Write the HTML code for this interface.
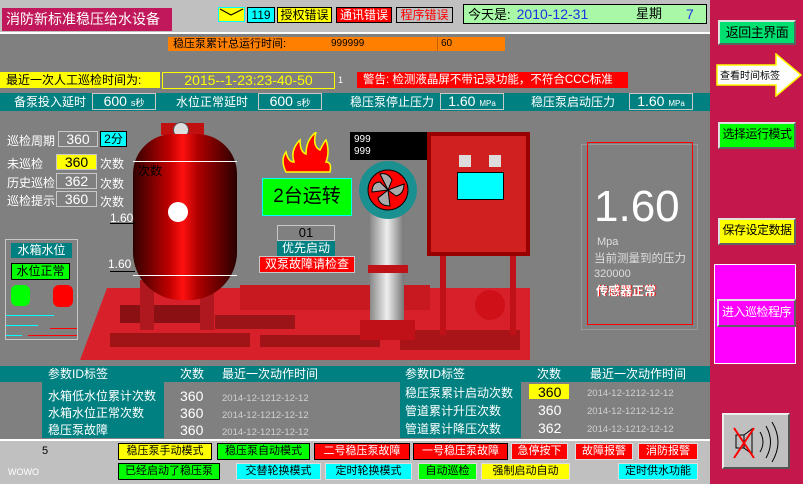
<!DOCTYPE html>
<html><head><meta charset="utf-8"><style>
*{margin:0;padding:0;box-sizing:border-box}
body{width:803px;height:484px;background:#808080;position:relative;overflow:hidden;font-family:"Liberation Sans","Noto Sans CJK SC",sans-serif;font-size:12px}
.a{position:absolute;white-space:nowrap}
.b{position:absolute;white-space:nowrap;text-align:center;font-size:12px;line-height:15px;border:1px solid #000}
.inb{position:absolute;border:1px solid #c8c8c8;color:#fff;text-align:center;font-size:14px;line-height:14px;white-space:nowrap}
.rb{position:absolute;border:2px solid #e0e0e0;border-right-color:#606060;border-bottom-color:#606060;text-align:center;font-size:12px;line-height:21px;color:#000;white-space:nowrap;letter-spacing:-0.5px}
.bt{position:absolute;border:1px solid #000;text-align:center;font-size:11px;line-height:15px;white-space:nowrap}
</style></head><body>
<!-- top bar -->
<div class="a" style="left:0;top:0;width:710px;height:34px;background:#c0c0c0;border-bottom:2px solid #fff"></div>
<div class="a" style="left:2px;top:8px;width:170px;height:23px;background:#c0185a;color:#fff;font-size:14px;line-height:23px;padding-left:4px">消防新标准稳压给水设备</div>
<div class="a" style="left:218px;top:7px;width:27px;height:15px;background:#ff0;border:1px solid #0ff"><svg width="25" height="13"><polyline points="1,1 12,7 24,1" fill="none" stroke="#000" stroke-width="1"/></svg></div>
<div class="b" style="left:247px;top:7px;width:28px;height:16px;background:#0ff">119</div>
<div class="b" style="left:277px;top:7px;width:55px;height:16px;background:#ff0">授权错误</div>
<div class="b" style="left:336px;top:7px;width:56px;height:16px;background:#f00;color:#fff">通讯错误</div>
<div class="b" style="left:396px;top:7px;width:57px;height:16px;background:#c0c0c0;color:#f00">程序错误</div>
<div class="a" style="left:463px;top:4px;width:244px;height:20px;background:#a8f8a8;border:1px solid #000;font-size:13px;line-height:18px"><span style="margin-left:4px">今天是:</span><span style="color:#2030e0;margin-left:6px;font-size:14px">2010-12-31</span><span style="position:absolute;left:172px">星期</span><span style="position:absolute;left:222px;color:#2030e0;font-size:14px">7</span></div>
<!-- orange -->
<div class="a" style="left:168px;top:37px;width:337px;height:14px;background:#ff8000;font-size:11px;line-height:14px"><span style="margin-left:5px">稳压泵累计总运行时间:</span><span style="position:absolute;left:163px;font-size:10px">999999</span><span style="position:absolute;left:269px;top:0;width:1px;height:14px;background:#c06000"></span><span style="position:absolute;left:273px;font-size:10px">60</span></div>
<!-- yellow row -->
<div class="a" style="left:0;top:72px;width:160px;height:16px;background:#ff0;font-size:12px;line-height:16px;padding-left:6px">最近一次人工巡检时间为:</div>
<div class="a" style="left:162px;top:72px;width:173px;height:17px;border:1px solid #ff0;color:#ff0;font-size:14px;line-height:15px;text-align:center">2015--1-23:23-40-50</div>
<div class="a" style="left:338px;top:75px;color:#fff;font-size:9px">1</div>
<div class="a" style="left:357px;top:72px;width:271px;height:16px;background:#f00;color:#fff;font-size:11.5px;line-height:16px;padding-left:6px;overflow:hidden">警告: 检测液晶屏不带记录功能，不符合CCC标准</div>
<!-- teal row -->
<div class="a" style="left:0;top:93px;width:710px;height:18px;background:#008080;color:#fff;font-size:12px;line-height:18px">
<span class="a" style="left:14px">备泵投入延时</span><span class="a" style="left:176px">水位正常延时</span><span class="a" style="left:350px">稳压泵停止压力</span><span class="a" style="left:531px">稳压泵启动压力</span></div>
<div class="inb" style="left:92px;top:93px;width:64px;height:17px">600 <span style="font-size:9px">s秒</span></div>
<div class="inb" style="left:258px;top:93px;width:64px;height:17px">600 <span style="font-size:9px">s秒</span></div>
<div class="inb" style="left:440px;top:93px;width:64px;height:17px">1.60 <span style="font-size:8px">MPa</span></div>
<div class="inb" style="left:629px;top:93px;width:64px;height:17px">1.60 <span style="font-size:8px">MPa</span></div>
<!-- left inspection -->
<div class="a" style="left:7px;top:132px;color:#fff;font-size:12px">巡检周期</div>
<div class="inb" style="left:58px;top:131px;width:40px;height:16px;font-size:14px">360</div>
<div class="a" style="left:100px;top:131px;width:27px;height:16px;background:#0ff;border:1px solid #000;text-align:center;font-size:12px;line-height:14px">2分</div>
<div class="a" style="left:7px;top:155px;color:#fff;font-size:12px">未巡检</div>
<div class="a" style="left:56px;top:154px;width:41px;height:16px;background:#ff0;border:1px solid #c8c8c8;text-align:center;font-size:14px;line-height:14px">360</div>
<div class="a" style="left:100px;top:155px;color:#fff;font-size:12px">次数</div>
<div class="a" style="left:7px;top:174px;color:#fff;font-size:12px">历史巡检</div>
<div class="inb" style="left:56px;top:173px;width:41px;height:16px">362</div>
<div class="a" style="left:100px;top:175px;color:#fff;font-size:12px">次数</div>
<div class="a" style="left:7px;top:192px;color:#fff;font-size:12px">巡检提示</div>
<div class="inb" style="left:56px;top:191px;width:41px;height:16px">360</div>
<div class="a" style="left:100px;top:193px;color:#fff;font-size:12px">次数</div>
<!-- water tank box -->
<div class="a" style="left:5px;top:239px;width:73px;height:101px;border:1px solid #c8c8c8"></div>
<div class="a" style="left:11px;top:243px;width:61px;height:15px;background:#008080;color:#fff;font-size:12px;line-height:15px;text-align:center">水箱水位</div>
<div class="a" style="left:11px;top:263px;width:59px;height:17px;background:#0f0;border:1px solid #000;font-size:12px;line-height:15px;text-align:center">水位正常</div>
<div class="a" style="left:11px;top:285px;width:19px;height:21px;background:#0f0;border-radius:6px"></div>
<div class="a" style="left:53px;top:285px;width:20px;height:22px;background:#f00;border-radius:6px"></div>
<div class="a" style="left:6px;top:315px;width:48px;height:1px;background:#0ff"></div>
<div class="a" style="left:6px;top:325px;width:32px;height:1px;background:#0ff"></div>
<div class="a" style="left:50px;top:328px;width:27px;height:1px;background:#f00"></div>
<div class="a" style="left:6px;top:335px;width:16px;height:1px;background:#0ff"></div>
<div class="a" style="left:28px;top:335px;width:49px;height:1px;background:#f00"></div>
<!-- equipment -->
<div class="a" style="left:80px;top:288px;width:450px;height:72px;background:#d8202a;clip-path:polygon(6% 0,100% 0,100% 100%,0 100%)"></div>
<div class="a" style="left:120px;top:305px;width:90px;height:18px;background:#8a1014"></div>
<div class="a" style="left:215px;top:315px;width:80px;height:14px;background:#9a1418"></div>
<div class="a" style="left:110px;top:333px;width:140px;height:14px;background:#a01418"></div>
<div class="a" style="left:260px;top:335px;width:120px;height:12px;background:#a01418"></div>
<div class="a" style="left:400px;top:330px;width:120px;height:20px;background:#a81418"></div>
<div class="a" style="left:140px;top:280px;width:14px;height:50px;background:#b01820"></div>
<div class="a" style="left:200px;top:280px;width:14px;height:50px;background:#b01820"></div>
<div class="a" style="left:240px;top:285px;width:190px;height:25px;background:#c81820"></div>
<div class="a" style="left:161px;top:123px;width:43px;height:12px;background:#c01010"></div>
<div class="a" style="left:173px;top:122px;width:16px;height:16px;background:#ddd;border-radius:50%;border:1px solid #555"></div>
<div class="a" style="left:133px;top:134px;width:104px;height:166px;border-radius:40px 40px 48px 48px;background:linear-gradient(90deg,#300000,#c00000 35%,#ff1010 48%,#b00000 62%,#280000)"></div>
<div class="a" style="left:133px;top:161px;width:104px;height:1px;background:#fff"></div>
<div class="a" style="left:133px;top:275px;width:104px;height:1px;background:#fff"></div>
<div class="a" style="left:138px;top:162px;font-size:12px;color:#000">次数</div>
<div class="a" style="left:168px;top:202px;width:20px;height:20px;background:#fff;border-radius:50%"></div>
<div class="a" style="left:110px;top:211px;color:#fff;font-size:12px">1.60</div>
<div class="a" style="left:110px;top:223px;width:25px;height:1px;background:#000"></div>
<div class="a" style="left:108px;top:257px;color:#fff;font-size:12px">1.60</div>
<div class="a" style="left:110px;top:271px;width:25px;height:1px;background:#000"></div>
<!-- pump -->
<div class="a" style="left:370px;top:195px;width:34px;height:135px;background:linear-gradient(90deg,#888,#eee,#777)"></div>
<div class="a" style="left:368px;top:265px;width:40px;height:8px;background:#c01018"></div>
<div class="a" style="left:360px;top:320px;width:55px;height:20px;background:#c01018"></div>
<div class="a" style="left:440px;top:255px;width:6px;height:80px;background:#c01018"></div>
<div class="a" style="left:510px;top:255px;width:6px;height:80px;background:#c01018"></div>
<div class="a" style="left:475px;top:290px;width:30px;height:30px;background:#d01018;border-radius:50%"></div>
<!-- cabinet -->
<div class="a" style="left:427px;top:132px;width:103px;height:124px;background:#d02020;border:4px solid #900"></div>
<div class="a" style="left:457px;top:172px;width:47px;height:28px;background:#0ff;border:1px solid #000"></div>
<div class="a" style="left:459px;top:155px;width:12px;height:12px;background:#ddd"></div>
<div class="a" style="left:489px;top:155px;width:12px;height:12px;background:#ddd"></div>
<div class="a" style="left:350px;top:132px;width:77px;height:28px;background:#000;color:#fff;font-size:10px;line-height:12px;padding:2px 4px">999<br>999</div>
<svg class="a" style="left:358px;top:160px" width="60" height="60"><circle cx="30" cy="30" r="29" fill="#1a9090"/><circle cx="30" cy="30" r="20" fill="#f00" stroke="#000"/><path d="M30 30 L22 14 Q30 12 34 20Z M30 30 L46 24 Q46 34 38 36Z M30 30 L32 46 Q22 46 20 38Z M30 30 L14 32 Q14 22 22 22Z" fill="#aaa" stroke="#000"/></svg>
<!-- fire -->
<svg class="a" style="left:280px;top:132px" width="52" height="44"><path d="M6 40 Q0 28 6 20 Q8 30 14 30 Q10 18 20 8 Q20 20 26 22 Q26 8 36 0 Q32 14 40 18 Q44 10 46 8 Q50 20 46 30 Q52 30 50 40Z" fill="#f00" stroke="#ff0" stroke-width="1.5"/></svg>
<div class="a" style="left:262px;top:178px;width:90px;height:38px;background:#0f0;border:1px solid #0ff;font-size:19px;line-height:36px;text-align:center">2台运转</div>
<div class="a" style="left:277px;top:225px;width:58px;height:16px;border:1px solid #c8c8c8;text-align:center;font-size:13px;line-height:14px">01</div>
<div class="a" style="left:277px;top:241px;width:58px;height:15px;background:#008080;color:#fff;text-align:center;font-size:12px;line-height:15px">优先启动</div>
<div class="a" style="left:259px;top:256px;width:96px;height:17px;background:#f00;border:1px solid #c8c8c8;color:#fff;text-align:center;font-size:12px;line-height:15px">双泵故障请检查</div>
<!-- pressure display -->
<div class="a" style="left:581px;top:144px;width:117px;height:186px;border:1px solid #999"></div>
<div class="a" style="left:587px;top:142px;width:106px;height:183px;border:1px solid #f00"></div>
<div class="a" style="left:594px;top:184px;color:#fff;font-size:44px;line-height:46px">1.60</div>
<div class="a" style="left:597px;top:236px;color:#ddd;font-size:11px">Mpa</div>
<div class="a" style="left:594px;top:250px;color:#ddd;font-size:11.5px">当前测量到的压力</div>
<div class="a" style="left:594px;top:268px;color:#ddd;font-size:11px">320000</div>
<div class="a" style="left:596px;top:282px;color:#fff;font-size:12px;font-weight:bold;text-shadow:1px 0 #f00">传感器正常</div>
<!-- right panel -->
<div class="a" style="left:710px;top:0;width:93px;height:484px;background:#c4184c"></div>
<div class="rb" style="left:718px;top:20px;width:78px;height:25px;background:#00e070;font-size:13px">返回主界面</div>
<svg class="a" style="left:716px;top:53px" width="86" height="44"><polygon points="1,12 60,12 60,1 85,22 60,43 60,32 1,32" fill="#fff" stroke="#ff0" stroke-width="1.5"/><text x="4" y="26" font-size="10" font-family="Liberation Sans,Noto Sans CJK SC,sans-serif">查看时间标签</text></svg>
<div class="rb" style="left:718px;top:122px;width:78px;height:27px;background:#0f0">选择运行模式</div>
<div class="rb" style="left:718px;top:218px;width:78px;height:27px;background:#ff0">保存设定数据</div>
<div class="a" style="left:714px;top:264px;width:82px;height:100px;background:#f0f;border:1px solid #fff"></div>
<div class="rb" style="left:717px;top:299px;width:79px;height:28px;background:#f0f;color:#fff;line-height:23px">进入巡检程序</div>
<div class="a" style="left:722px;top:413px;width:68px;height:56px;background:#c0c0c0;border:2px solid #eee;border-right-color:#555;border-bottom-color:#555"></div>
<svg class="a" style="left:730px;top:420px" width="56" height="44"><rect x="6" y="15" width="8" height="13" fill="none" stroke="#000"/><polygon points="14,15 22,9 22,34 14,28" fill="none" stroke="#000"/><line x1="4" y1="8" x2="24" y2="38" stroke="#f00" stroke-width="2"/><line x1="24" y1="8" x2="4" y2="38" stroke="#f00" stroke-width="2"/><path d="M30 12 Q36 22 30 32 M36 6 Q45 22 36 38 M42 2 Q54 22 42 42" fill="none" stroke="#000"/></svg>
<!-- table -->
<div class="a" style="left:0;top:366px;width:710px;height:16px;background:#008080;color:#fff;font-size:12px;line-height:16px">
<span class="a" style="left:48px">参数ID标签</span><span class="a" style="left:180px">次数</span><span class="a" style="left:222px">最近一次动作时间</span><span class="a" style="left:405px">参数ID标签</span><span class="a" style="left:537px">次数</span><span class="a" style="left:590px">最近一次动作时间</span></div>
<div class="a" style="left:42px;top:382px;width:122px;height:56px;background:#008080"></div>
<div class="a" style="left:400px;top:382px;width:121px;height:56px;background:#008080"></div>
<div class="a" style="left:48px;top:388px;color:#fff;font-size:12px;line-height:17px">水箱低水位累计次数<br>水箱水位正常次数<br>稳压泵故障</div>
<div class="a" style="left:180px;top:388px;color:#fff;font-size:14px;line-height:17px">360<br>360<br>360</div>
<div class="a" style="left:222px;top:390px;color:#d0d0d0;font-size:9.5px;line-height:17px">2014-12-1212-12-12<br>2014-12-1212-12-12<br>2014-12-1212-12-12</div>
<div class="a" style="left:405px;top:384px;color:#fff;font-size:12px;line-height:18px">稳压泵累计启动次数<br>管道累计升压次数<br>管道累计降压次数</div>
<div class="a" style="left:529px;top:384px;width:40px;height:15px;background:#ff0"></div>
<div class="a" style="left:538px;top:383px;color:#000;font-size:14px;line-height:18px">360</div>
<div class="a" style="left:538px;top:401px;color:#fff;font-size:14px;line-height:18px">360<br>362</div>
<div class="a" style="left:587px;top:385px;color:#d0d0d0;font-size:9.5px;line-height:18px">2014-12-1212-12-12<br>2014-12-1212-12-12<br>2014-12-1212-12-12</div>
<!-- bottom -->
<div class="a" style="left:0;top:439px;width:710px;height:45px;background:#c0c0c0;border-top:2px solid #fff"></div>
<div class="a" style="left:42px;top:445px;font-size:11px">5</div>
<div class="a" style="left:8px;top:467px;font-size:9px;color:#fff">WOWO</div>
<div class="bt" style="left:118px;top:443px;width:94px;height:17px;background:#ff0">稳压泵手动模式</div>
<div class="bt" style="left:217px;top:443px;width:93px;height:17px;background:#0f0">稳压泵自动模式</div>
<div class="bt" style="left:314px;top:443px;width:96px;height:17px;background:#f00;color:#fff">二号稳压泵故障</div>
<div class="bt" style="left:413px;top:443px;width:95px;height:17px;background:#f00;color:#fff">一号稳压泵故障</div>
<div class="bt" style="left:511px;top:443px;width:57px;height:17px;background:#f00;color:#fff;border-color:#ddd">急停按下</div>
<div class="bt" style="left:575px;top:443px;width:58px;height:17px;background:#f00;color:#fff;border-color:#ddd">故障报警</div>
<div class="bt" style="left:638px;top:443px;width:60px;height:17px;background:#f00;color:#fff;border-color:#ddd">消防报警</div>
<div class="bt" style="left:118px;top:463px;width:102px;height:17px;background:#0f0">已经启动了稳压泵</div>
<div class="bt" style="left:236px;top:463px;width:85px;height:17px;background:#0ff;border-color:#ddd">交替轮换模式</div>
<div class="bt" style="left:325px;top:463px;width:87px;height:17px;background:#0ff;border-color:#ddd">定时轮换模式</div>
<div class="bt" style="left:418px;top:463px;width:59px;height:17px;background:#0f0;border-color:#ddd">自动巡检</div>
<div class="bt" style="left:481px;top:463px;width:89px;height:17px;background:#ff0;border-color:#ddd">强制启动自动</div>
<div class="bt" style="left:618px;top:463px;width:80px;height:17px;background:#0ff;border-color:#ddd">定时供水功能</div>
</body></html>
